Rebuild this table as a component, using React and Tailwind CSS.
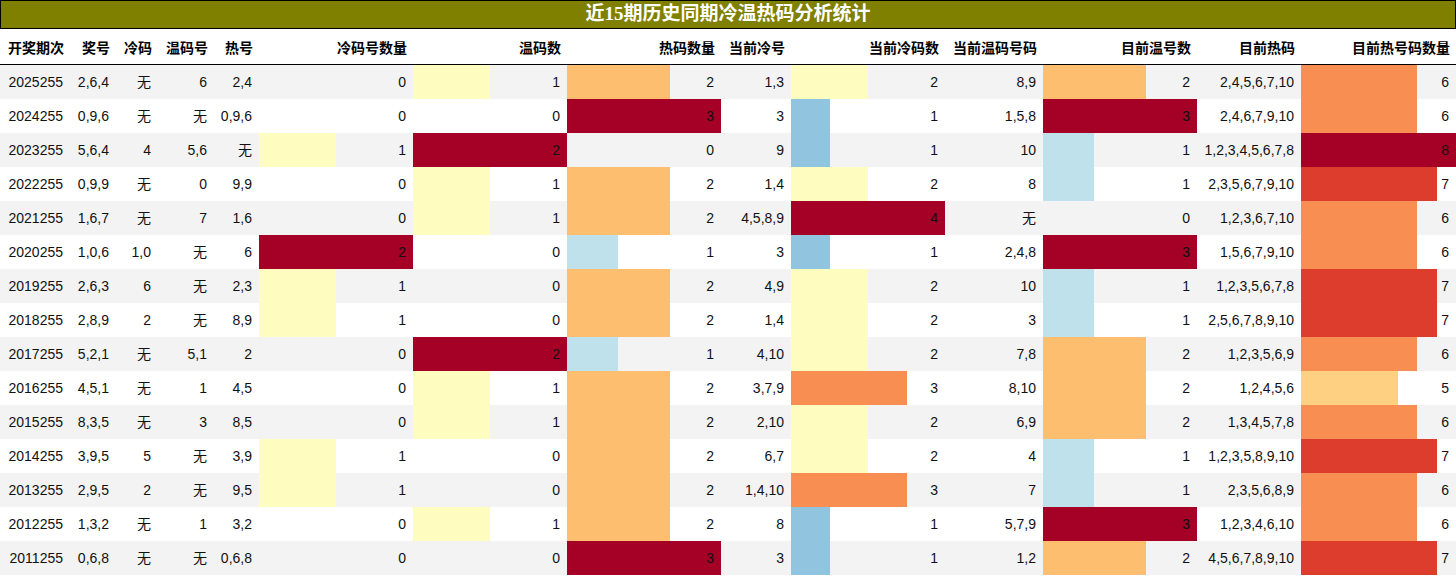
import React from "react";

const C = {
  y: "bg-[#fffcc0]",
  dr: "bg-[#a50026]",
  o: "bg-[#fdbe70]",
  o2: "bg-[#f98e52]",
  r: "bg-[#dc3d2d]",
  lo: "bg-[#fdd181]",
  lb: "bg-[#bfe1ec]",
  b: "bg-[#91c4df]",
};

const barCols = {
  5: { max: 2, colors: { 1: C.y, 2: C.dr } },
  6: { max: 2, colors: { 1: C.y, 2: C.dr } },
  7: { max: 3, colors: { 1: C.lb, 2: C.o, 3: C.dr } },
  9: { max: 4, colors: { 1: C.b, 2: C.y, 3: C.o2, 4: C.dr } },
  11: { max: 3, colors: { 1: C.lb, 2: C.o, 3: C.dr } },
  13: { max: 8, colors: { 5: C.lo, 6: C.o2, 7: C.r, 8: C.dr } },
};

const headers = [
  "开奖期次", "奖号", "冷码", "温码号", "热号", "冷码号数量", "温码数", "热码数量",
  "当前冷号", "当前冷码数", "当前温码号码", "目前温号数", "目前热码", "目前热号码数量",
];

const rows = [
  ["2025255", "2,6,4", "无", "6", "2,4", 0, 1, 2, "1,3", 2, "8,9", 2, "2,4,5,6,7,10", 6],
  ["2024255", "0,9,6", "无", "无", "0,9,6", 0, 0, 3, "3", 1, "1,5,8", 3, "2,4,6,7,9,10", 6],
  ["2023255", "5,6,4", "4", "5,6", "无", 1, 2, 0, "9", 1, "10", 1, "1,2,3,4,5,6,7,8", 8],
  ["2022255", "0,9,9", "无", "0", "9,9", 0, 1, 2, "1,4", 2, "8", 1, "2,3,5,6,7,9,10", 7],
  ["2021255", "1,6,7", "无", "7", "1,6", 0, 1, 2, "4,5,8,9", 4, "无", 0, "1,2,3,6,7,10", 6],
  ["2020255", "1,0,6", "1,0", "无", "6", 2, 0, 1, "3", 1, "2,4,8", 3, "1,5,6,7,9,10", 6],
  ["2019255", "2,6,3", "6", "无", "2,3", 1, 0, 2, "4,9", 2, "10", 1, "1,2,3,5,6,7,8", 7],
  ["2018255", "2,8,9", "2", "无", "8,9", 1, 0, 2, "1,4", 2, "3", 1, "2,5,6,7,8,9,10", 7],
  ["2017255", "5,2,1", "无", "5,1", "2", 0, 2, 1, "4,10", 2, "7,8", 2, "1,2,3,5,6,9", 6],
  ["2016255", "4,5,1", "无", "1", "4,5", 0, 1, 2, "3,7,9", 3, "8,10", 2, "1,2,4,5,6", 5],
  ["2015255", "8,3,5", "无", "3", "8,5", 0, 1, 2, "2,10", 2, "6,9", 2, "1,3,4,5,7,8", 6],
  ["2014255", "3,9,5", "5", "无", "3,9", 1, 0, 2, "6,7", 2, "4", 1, "1,2,3,5,8,9,10", 7],
  ["2013255", "2,9,5", "2", "无", "9,5", 1, 0, 2, "1,4,10", 3, "7", 1, "2,3,5,6,8,9", 6],
  ["2012255", "1,3,2", "无", "1", "3,2", 0, 1, 2, "8", 1, "5,7,9", 3, "1,2,3,4,6,10", 6],
  ["2011255", "0,6,8", "无", "无", "0,6,8", 0, 0, 3, "3", 1, "1,2", 2, "4,5,6,7,8,9,10", 7],
];

const grid =
  "grid grid-cols-[70px_46px_42px_56px_45px_154px_154px_154px_70px_154px_98px_154px_104px_155px]";

function Cell({ value, col }) {
  const bc = barCols[col];
  const bar = bc && value > 0 ? bc.colors[value] : null;
  return (
    <div className="relative flex h-[34px] items-center justify-end pr-[7px]">
      {bar && (
        <div
          className={`absolute inset-y-0 left-0 ${bar}`}
          style={{ width: `${(value / bc.max) * 100}%` }}
        />
      )}
      <span className="relative">{value}</span>
    </div>
  );
}

export default function App() {
  return (
    <div
      className="w-[1456px] bg-white text-[14px] text-[#111]"
      style={{ fontFamily: '"Liberation Sans", "Noto Sans CJK SC", sans-serif' }}
    >
      <div
        className="flex h-[29px] items-center justify-center border border-black bg-[#808000] text-[19px] font-bold text-white"
        style={{ fontFamily: '"Liberation Serif", "Noto Sans CJK SC", serif' }}
      >
        近15期历史同期冷温热码分析统计
      </div>
      <div
        className={`${grid} h-[36px] border-b border-black font-bold text-black`}
        style={{ fontFamily: '"Noto Sans CJK SC", sans-serif' }}
      >
        {headers.map((h) => (
          <div key={h} className="flex items-center justify-end pr-[6px] pt-[2px]">
            {h}
          </div>
        ))}
      </div>
      {rows.map((r, i) => (
        <div key={r[0]} className={`${grid} ${i % 2 === 0 ? "bg-[#f3f3f3]" : "bg-white"}`}>
          {r.map((v, j) => (
            <Cell key={j} value={v} col={j} />
          ))}
        </div>
      ))}
    </div>
  );
}
